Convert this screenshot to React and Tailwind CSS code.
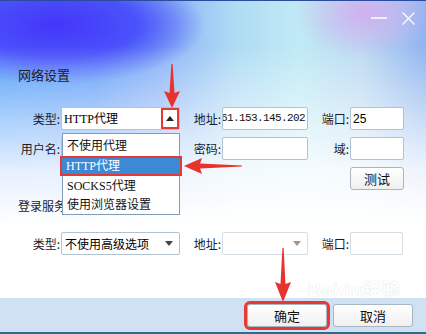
import React from "react";

const labelCls =
  "flex items-center justify-end pr-[1px] text-[12px] text-[#1b1b2b] font-['Noto_Sans_CJK_SC',sans-serif]";
const boxCls = "h-full bg-white border border-[#b3c2d1] rounded-[2px]";
const btnCls =
  "flex items-center justify-center rounded-[3px] border border-[#a8b5c2] bg-[linear-gradient(to_bottom,#ffffff,#f0f0f0)] text-[13px] text-[#111] font-['Noto_Sans_CJK_SC',sans-serif]";

function Label({ children }) {
  return <div className={labelCls}>{children}</div>;
}

function Input({ children, className = "" }) {
  return <div className={`${boxCls} ${className}`}>{children}</div>;
}

function Caret({ up, color = "#222" }) {
  return (
    <svg width="8" height="5" viewBox="0 0 8 5">
      <path d={up ? "M0 5 L4 0 L8 5 Z" : "M0 0 L4 5 L8 0 Z"} fill={color} />
    </svg>
  );
}

export default function App() {
  const options = ["不使用代理", "HTTP代理", "SOCKS5代理", "使用浏览器设置"];

  return (
    <div className="relative flex h-[334px] w-[426px] flex-col overflow-hidden border-t border-[#2b4c9c] bg-[linear-gradient(to_bottom,rgba(255,255,255,0)_0px,rgba(255,255,255,0)_45px,rgba(255,255,255,0.5)_115px,rgba(255,255,255,0.85)_170px,#fff_225px),radial-gradient(ellipse_150px_60px_at_55px_24px,#4436fa_0%,#4a52fa_55%,rgba(74,82,250,0)_100%),radial-gradient(ellipse_70px_45px_at_365px_12px,#cfb0ef_0%,rgba(207,176,239,0)_100%),linear-gradient(to_right,#4f9ef8_0%,#5e9cf8_22%,#8ab2f6_38%,#afdbf4_55%,#bfeaf4_70%,#bcdaf2_85%,#8fb4f0_100%)]">
      {/* window controls */}
      <div className="flex h-[67px] items-start justify-end gap-[14px] pr-[11px] pt-[10px]">
        <svg width="18" height="14" viewBox="0 0 18 14">
          <line x1="1" y1="7" x2="17" y2="7" stroke="#fff" strokeWidth="1.5" />
        </svg>
        <svg width="13" height="14" viewBox="0 0 13 14">
          <path d="M0.5 1.5 L12.5 13.5 M12.5 1.5 L0.5 13.5" stroke="#fff" strokeWidth="1.2" />
        </svg>
      </div>

      <div className="pl-[18px] text-[13px] leading-[14px] text-[#1b1b2b] font-['Noto_Sans_CJK_SC',sans-serif]">
        网络设置
      </div>

      {/* proxy settings */}
      <div className="mt-[25px] grid grid-cols-[61px_119px_42px_86px_42px_54px] grid-rows-[23px_23px_23px] gap-y-[7px]">
        <Label>类型:</Label>
        <div className={`${boxCls} flex items-stretch`}>
          <div className="flex flex-1 items-center pl-[2px] text-[12px] font-['Liberation_Serif','Noto_Sans_CJK_SC',serif]">
            HTTP代理
          </div>
          <div className="flex w-[18px] items-center justify-center border-2 border-[#e53935] bg-white">
            <Caret up />
          </div>
        </div>
        <Label>地址:</Label>
        <Input className="flex items-center justify-end overflow-hidden pr-[2px]">
          <span className="whitespace-nowrap text-[11px] tracking-[-0.6px] text-[#111] font-['Liberation_Mono',monospace]">
            61.153.145.202
          </span>
        </Input>
        <Label>端口:</Label>
        <Input className="flex items-center pl-[2px] text-[12px] font-['Liberation_Sans',sans-serif]">
          25
        </Input>

        <Label>用户名:</Label>
        <Input />
        <Label>密码:</Label>
        <Input />
        <Label>域:</Label>
        <Input />

        <button className={`${btnCls} col-start-6`}>测试</button>
      </div>

      <div className="mt-[9px] pl-[18px] text-[12px] leading-[14px] text-[#1b1b2b] font-['Noto_Sans_CJK_SC',sans-serif]">
        登录服务器设置
      </div>

      {/* login server */}
      <div className="mt-[19px] grid grid-cols-[61px_119px_42px_86px_42px_54px] grid-rows-[23px]">
        <Label>类型:</Label>
        <Input className="flex items-center justify-between pl-[3px] pr-[6px] text-[12px] font-['Noto_Sans_CJK_SC',sans-serif]">
          <span>不使用高级选项</span>
          <Caret color="#444" />
        </Input>
        <Label>地址:</Label>
        <Input className="flex items-center justify-end border-[#d5dde5] pr-[6px]">
          <Caret color="#9a9a9a" />
        </Input>
        <Label>端口:</Label>
        <Input className="mr-[1px] border-[#d5dde5]" />
      </div>

      {/* footer */}
      <div className="mt-auto flex h-[34px] items-start justify-end gap-[6px] bg-[#cfe1f2] pr-[13px] pt-[6px]">
        <button className={`${btnCls} h-[23px] w-[80px] outline-[3px] outline-[#e53935]`}>确定</button>
        <button className={`${btnCls} h-[23px] w-[80px]`}>取消</button>
      </div>
      <div className="h-[2px] bg-[#2b6b8c]" />

      {/* open dropdown list */}
      <div className="absolute left-[62px] top-[132px] w-[118px] border border-[#7f9db9] bg-white pt-[2px] text-[12px] text-[#111] font-['Liberation_Serif','Noto_Sans_CJK_SC',serif]">
        {options.map((o, i) =>
          i === 1 ? (
            <div key={o} className="-mx-[3px] h-[20px] border-2 border-[#e53935]">
              <div className="flex h-full items-center bg-[#3c89d6] pl-[4px] text-white">{o}</div>
            </div>
          ) : (
            <div key={o} className={`flex items-center pl-[4px] ${i === 3 ? "h-[18px]" : "h-[20px]"}`}>
              {o}
            </div>
          )
        )}
      </div>

      {/* watermark */}
      <div className="pointer-events-none absolute left-[308px] top-[280px] text-[18px] font-bold leading-none tracking-[1px] text-white opacity-40 [text-shadow:0_0_1px_#8a94a0] font-['Liberation_Sans','Noto_Sans_CJK_SC',sans-serif]">
        Baidu经验
      </div>

      {/* red annotation arrows */}
      <svg className="absolute left-[163px] top-[62px]" width="18" height="46" viewBox="0 0 18 46">
        <polygon points="8.4,1 9.6,1 11.5,30 17,28 9,45 1,28 6.5,30" fill="#e8322e" />
      </svg>
      <svg className="absolute left-[182px] top-[154px]" width="62" height="22" viewBox="0 0 62 22">
        <polygon points="2,11 20,3 18,8.5 60,10.5 60,11.5 18,13.5 20,19" fill="#e8322e" />
      </svg>
      <svg className="absolute left-[274px] top-[246px]" width="18" height="56" viewBox="0 0 18 56">
        <polygon points="8.4,1 9.6,1 11.5,37 17,35 9,55 1,35 6.5,37" fill="#e8322e" />
      </svg>
    </div>
  );
}
